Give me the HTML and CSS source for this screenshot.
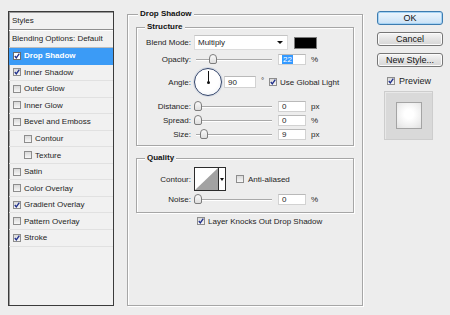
FILE: index.html
```html
<!DOCTYPE html>
<html>
<head>
<meta charset="utf-8">
<title>Layer Style</title>
<link rel="stylesheet" href="styles.css">
</head>
<body>
<div class="dialog">
  <div class="styles">
    <div class="styles-head">Styles</div>
    <div class="styles-blend">Blending Options: Default</div>
    <ul class="style-list">
      <li class="sel"><span class="cb on"><svg viewBox="0 0 6 6"><path d="M0.8 3 L2.3 4.9 L5.3 0.6"/></svg></span><b>Drop Shadow</b></li>
      <li><span class="cb on"><svg viewBox="0 0 6 6"><path d="M0.8 3 L2.3 4.9 L5.3 0.6"/></svg></span>Inner Shadow</li>
      <li><span class="cb"></span>Outer Glow</li>
      <li><span class="cb"></span>Inner Glow</li>
      <li><span class="cb"></span>Bevel and Emboss</li>
      <li class="sub"><span class="cb"></span>Contour</li>
      <li class="sub"><span class="cb"></span>Texture</li>
      <li><span class="cb"></span>Satin</li>
      <li><span class="cb"></span>Color Overlay</li>
      <li><span class="cb on"><svg viewBox="0 0 6 6"><path d="M0.8 3 L2.3 4.9 L5.3 0.6"/></svg></span>Gradient Overlay</li>
      <li><span class="cb"></span>Pattern Overlay</li>
      <li><span class="cb on"><svg viewBox="0 0 6 6"><path d="M0.8 3 L2.3 4.9 L5.3 0.6"/></svg></span>Stroke</li>
    </ul>
  </div>

  <fieldset class="panel">
    <legend>Drop Shadow</legend>

    <fieldset class="group structure">
      <legend>Structure</legend>
      <div class="row row-blend">
        <span class="lbl">Blend Mode:</span>
        <div class="select"><span>Multiply</span><span class="arrow"></span></div>
        <span class="swatch"></span>
      </div>
      <div class="row row-opacity">
        <span class="lbl">Opacity:</span>
        <div class="slider"><span class="thumb" style="left:13px"></span></div>
        <span class="field"><span class="hl">22</span></span>
        <span class="unit">%</span>
      </div>
      <div class="row row-angle">
        <span class="lbl">Angle:</span>
        <span class="dial"></span>
        <span class="field field-angle">90</span>
        <span class="deg">°</span>
        <span class="cb on cb-global"><svg viewBox="0 0 6 6"><path d="M0.8 3 L2.3 4.9 L5.3 0.6"/></svg></span>
        <span class="cb-text">Use Global Light</span>
      </div>
      <div class="row row-distance">
        <span class="lbl">Distance:</span>
        <div class="slider"><span class="thumb" style="left:-2px"></span></div>
        <span class="field">0</span>
        <span class="unit">px</span>
      </div>
      <div class="row">
        <span class="lbl">Spread:</span>
        <div class="slider"><span class="thumb" style="left:-2px"></span></div>
        <span class="field">0</span>
        <span class="unit">%</span>
      </div>
      <div class="row">
        <span class="lbl">Size:</span>
        <div class="slider"><span class="thumb" style="left:4px"></span></div>
        <span class="field">9</span>
        <span class="unit">px</span>
      </div>
    </fieldset>

    <fieldset class="group quality">
      <legend>Quality</legend>
      <div class="row row-contour">
        <span class="lbl">Contour:</span>
        <span class="contour">
          <svg class="curve" viewBox="0 0 23 22"><path d="M0 22 L23 0 L23 22 Z"/></svg>
          <span class="contour-drop"><span class="arrow"></span></span>
        </span>
        <span class="cb cb-aa"></span>
        <span class="cb-text">Anti-aliased</span>
      </div>
      <div class="row row-noise">
        <span class="lbl">Noise:</span>
        <div class="slider"><span class="thumb" style="left:-2px"></span></div>
        <span class="field">0</span>
        <span class="unit">%</span>
      </div>
    </fieldset>

    <div class="row row-knock">
      <span class="cb on"><svg viewBox="0 0 6 6"><path d="M0.8 3 L2.3 4.9 L5.3 0.6"/></svg></span>
      <span class="cb-text">Layer Knocks Out Drop Shadow</span>
    </div>
  </fieldset>

  <div class="actions">
    <button class="btn btn-ok">OK</button>
    <button class="btn">Cancel</button>
    <button class="btn">New Style...</button>
    <div class="preview-row">
      <span class="cb on"><svg viewBox="0 0 6 6"><path d="M0.8 3 L2.3 4.9 L5.3 0.6"/></svg></span>
      <span class="preview-label">Preview</span>
    </div>
    <div class="preview-box"><span class="preview-swatch"></span></div>
  </div>
</div>
</body>
</html>
```

FILE: styles.css
```css
* { box-sizing: border-box; }

html, body {
  margin: 0;
  padding: 0;
  background: #ededed;
}

body {
  font-family: "Liberation Sans", Arial, sans-serif;
  font-size: 8px;
  color: #1e1e1e;
  width: 450px;
  height: 315px;
  overflow: hidden;
}

.dialog {
  display: flex;
  align-items: flex-start;
}

/* ---------- Styles list ---------- */
.styles {
  margin: 11px 0 0 8px;
  width: 106px;
  height: 295px;
  border: 1px solid #3b3b3b;
  background: #f1f1f1;
  box-shadow: inset 1px 1px 0 #9a9a9a;
}

.styles-head {
  height: 18px;
  padding-left: 3px;
  display: flex;
  align-items: center;
  border-bottom: 1px solid #8f8f8f;
  box-shadow: 0 1px 0 #fff;
}

.styles-blend {
  height: 18px;
  padding-left: 3px;
  display: flex;
  align-items: center;
  border-bottom: 1px solid #bdbdbd;
}

.style-list {
  list-style: none;
  margin: 0;
  padding: 0;
}

.style-list li {
  height: 16.55px;
  display: flex;
  align-items: center;
  padding-left: 4px;
  border-bottom: 1px solid #e1e1e1;
}

.style-list li .cb { margin-right: 3px; }

.style-list li.sub { padding-left: 15px; }

.style-list li.sel {
  background: #3b9bf6;
  color: #fff;
  border-bottom-color: #3b9bf6;
}

.style-list li.sel .cb { background: #fff; border-color: #6a6a6a; }

/* ---------- Checkbox ---------- */
.cb {
  flex: none;
  display: inline-block;
  width: 8px;
  height: 8px;
  border: 1px solid #8d8d8d;
  background: linear-gradient(#d9d9d9, #f7f7f7);
}

.cb svg {
  display: block;
  width: 6px;
  height: 6px;
}

.cb svg path {
  fill: none;
  stroke: #1f2f8c;
  stroke-width: 1.3;
}

.cb-text { margin-left: 3px; white-space: nowrap; }

/* ---------- Main panel ---------- */
fieldset {
  margin: 0;
  min-inline-size: 0;
  border: 1px solid #a6a6a6;
  box-shadow: inset 1px 1px 0 #fff, 1px 1px 0 #fff;
}

legend {
  font-weight: bold;
  line-height: 10px;
  height: 10px;
  padding: 0 2px;
  background: #ededed;
  color: #111;
}

.panel {
  margin: 9px 0 0 13px;
  width: 236px;
  height: 297px;
  padding: 0 8px;
}

.panel > legend { margin-left: 2px; }

.group {
  padding: 0;
}

.group > legend { margin-left: 8px; }

.structure {
  margin-top: 3px;
  padding-bottom: 4px;
}

.quality {
  margin-top: 7px;
  padding-bottom: 6px;
}

.row {
  display: flex;
  align-items: center;
  height: 14px;
}

.lbl {
  flex: none;
  width: 54px;
  text-align: right;
  white-space: nowrap;
}

.row-blend { height: 15px; margin-top: 3px; }
.row-opacity { margin-top: 2px; }
.row-angle { height: 30px; margin-top: 1px; }
.row-distance { margin-top: 2px; }
.row-contour { height: 24px; margin-top: 4px; }
.row-noise { margin-top: 1px; }
.row-knock { margin-top: 1px; padding-left: 61px; }

/* select */
.select {
  margin-left: 3px;
  width: 94px;
  height: 15px;
  background: #fff;
  border: 1px solid #dcdcdc;
  border-top-color: #c4c4c4;
  display: flex;
  align-items: center;
  justify-content: space-between;
  padding: 0 4px 0 3px;
}

.arrow {
  width: 0;
  height: 0;
  border-left: 3px solid transparent;
  border-right: 3px solid transparent;
  border-top: 3px solid #111;
}

.swatch {
  margin-left: 6px;
  width: 23px;
  height: 12px;
  background: #000;
  border: 1px solid #7a7a7a;
}

/* slider */
.slider {
  position: relative;
  margin-left: 5px;
  width: 76px;
  height: 10px;
}

.slider::before {
  content: "";
  position: absolute;
  left: 0;
  right: 0;
  top: 5px;
  height: 1px;
  background: #a9a9a9;
  box-shadow: 0 1px 0 #fff;
}

.thumb {
  position: absolute;
  top: 0;
  width: 8px;
  height: 10px;
  border: 1px solid #7d7d7d;
  border-radius: 4px 4px 2px 2px;
  background: linear-gradient(#fbfbfb, #dedede);
}

/* inputs */
.field {
  margin-left: 6px;
  width: 28px;
  height: 11px;
  background: #fff;
  border: 1px solid #d2d2d2;
  border-top-color: #b9b9b9;
  padding-left: 3px;
  display: flex;
  align-items: center;
  line-height: 9px;
}

.hl {
  background: #3399ff;
  color: #fff;
  padding: 0 1px;
}

.field-angle {
  margin-left: 2px;
  width: 32px;
  height: 12px;
}

.unit { margin-left: 5px; }

.deg {
  margin-left: 5px;
  width: 3px;
  align-self: center;
  position: relative;
  top: -2px;
}

.cb-global { margin-left: 5px; }

/* dial */
.dial {
  position: relative;
  flex: none;
  margin-left: 3px;
  width: 28px;
  height: 28px;
  border-radius: 50%;
  border: 1px solid #33456b;
  background: radial-gradient(circle at 45% 40%, #ffffff 55%, #e9edf3 100%);
  box-shadow: 0 0 0 1px #d6dbe4;
}

.dial::before {
  content: "";
  position: absolute;
  left: 12.5px;
  top: 2px;
  width: 1.5px;
  height: 12px;
  background: #111;
}

.dial::after {
  content: "";
  position: absolute;
  left: 11.5px;
  top: 12px;
  width: 3px;
  height: 3px;
  border-radius: 50%;
  background: #111;
}

/* contour */
.contour {
  flex: none;
  margin-left: 3px;
  width: 32px;
  height: 24px;
  border: 1px solid #2c2c2c;
  background: #fff;
  display: flex;
}

.curve {
  display: block;
  width: 23px;
  height: 22px;
}

.curve path { fill: #a2a2a2; }

.contour-drop {
  flex: 1;
  border-left: 1px solid #2c2c2c;
  display: flex;
  align-items: center;
  justify-content: center;
}

.contour-drop .arrow {
  border-left-width: 2px;
  border-right-width: 2px;
  border-top-width: 3px;
}

.cb-aa { margin-left: 10px; }
.row-contour .cb-text { margin-left: 4px; }

/* ---------- Actions ---------- */
.actions {
  margin: 11px 0 0 14px;
  width: 66px;
  display: flex;
  flex-direction: column;
  align-items: flex-start;
}

.btn {
  width: 66px;
  height: 14px;
  margin: 0 0 7px 0;
  padding: 0;
  font-family: "Liberation Sans", Arial, sans-serif;
  font-size: 9px;
  line-height: 12px;
  color: #111;
  border: 1px solid #767676;
  border-radius: 3px;
  background: linear-gradient(#f6f6f6, #e4e4e4 50%, #d6d6d6);
  box-shadow: inset 0 0 0 1px #fbfbfb;
}

.btn-ok {
  border-color: #3d7cb0;
  background: linear-gradient(#eef6fd, #dcecfa 50%, #c9e1f5);
  box-shadow: inset 0 0 0 1px #a6d3f4;
}

.preview-row {
  margin: 0 0 0 10px;
  height: 14px;
  display: flex;
  align-items: center;
}

.preview-label {
  margin-left: 4px;
  font-size: 9px;
}

.preview-box {
  margin: 3px 0 0 7px;
  width: 49px;
  height: 49px;
  background: #d9d9d9;
  border: 1px solid #cdcdcd;
  box-shadow: inset 1px 1px 0 #e8e8e8;
  display: flex;
  align-items: center;
  justify-content: center;
}

.preview-swatch {
  width: 26px;
  height: 27px;
  border: 1px solid #a4a4a4;
  background: radial-gradient(circle at 50% 45%, #ffffff 25%, #eeeeee 70%, #e0e0e0 100%);
}
```
